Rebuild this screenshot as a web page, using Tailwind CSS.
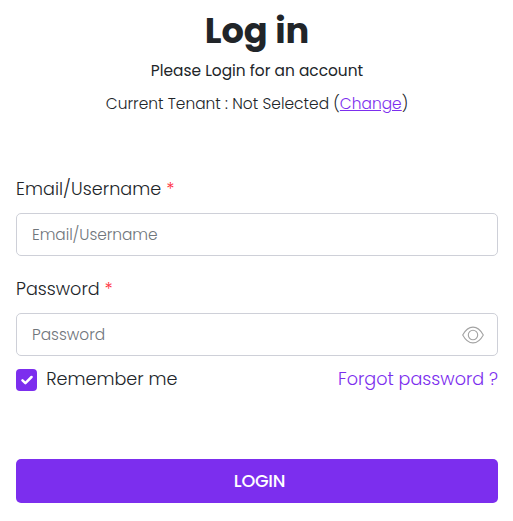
<!DOCTYPE html>
<html lang="en">
<head>
<meta charset="utf-8">
<title>Log in</title>
<script src="https://cdn.jsdelivr.net/npm/@tailwindcss/browser@4"></script>
</head>
<body class="bg-white font-['Poppins','Inter',sans-serif] text-[#212529]">
<main class="flex h-[521px] w-[513px] flex-col pl-4 pr-[15px] pt-[9px]">
  <header class="flex flex-col items-center whitespace-nowrap">
    <h1 class="h-11 text-[35.2px] leading-[44px] font-bold">Log in</h1>
    <p class="mt-1.5 h-6 text-[15.4px] leading-6 font-normal">Please Login for an account</p>
    <p class="mt-[9px] h-6 text-[15.4px] leading-6 font-light tracking-[0.03px]">Current Tenant : Not Selected (<a href="#" class="text-[#7c2eee] underline">Change</a>)</p>
  </header>
  <form class="flex flex-col">
    <label for="user" class="mt-[60px] h-[26px] text-[17.6px] leading-[26px] font-light tracking-[0.07px]">Email/Username <span class="text-[#ff3040]">*</span></label>
    <input id="user" type="text" placeholder="Email/Username" class="mt-[11px] h-[43px] rounded-[5px] border border-[#ced0d8] px-[15px] text-[15.4px] font-light tracking-[-0.06px] placeholder:text-[#70767c]">
    <label for="pass" class="mt-5 h-[26px] text-[17.6px] leading-[26px] font-light">Password <span class="text-[#ff3040]">*</span></label>
    <div class="mt-[11px] flex h-[43px] items-center rounded-[5px] border border-[#ced0d8] pl-[15px] pr-[13px]">
      <input id="pass" type="password" placeholder="Password" class="min-w-0 flex-1 text-[15.4px] font-light placeholder:text-[#70767c]">
      <svg class="h-[18px] w-[22px]" viewBox="0 0 22 18" fill="none" stroke="#a3a3a3" stroke-width="1.1"><path d="M.7 9C3.4 4 7 1.1 11 1.1S18.6 4 21.3 9C18.6 14 15 16.9 11 16.9S3.4 14 .7 9Z"/><circle cx="11" cy="9" r="4.7"/></svg>
    </div>
    <div class="mt-[10px] flex h-[26px] items-center justify-between text-[17.6px] leading-[26px] font-light">
      <label class="flex items-center gap-[9.3px]">
        <span class="mt-0.5 flex h-[22px] w-[21px] items-center justify-center rounded-[4px] bg-[#7c2eee]"><svg class="h-[10px] w-3" viewBox="0 0 12 10" fill="none" stroke="white" stroke-width="2.5" stroke-linecap="round" stroke-linejoin="round"><path d="M1.5 5.3 4.4 8.1 10.5 2"/></svg></span>
        <span>Remember me</span>
      </label>
      <a href="#" class="text-[#7c2eee]">Forgot password ?</a>
    </div>
    <button type="button" class="mt-[67px] h-11 rounded-[5px] bg-[#7c2eee] pl-[5px] pt-px text-[17.6px] font-medium tracking-[-0.25px] text-white">LOGIN</button>
  </form>
</main>
</body>
</html>
